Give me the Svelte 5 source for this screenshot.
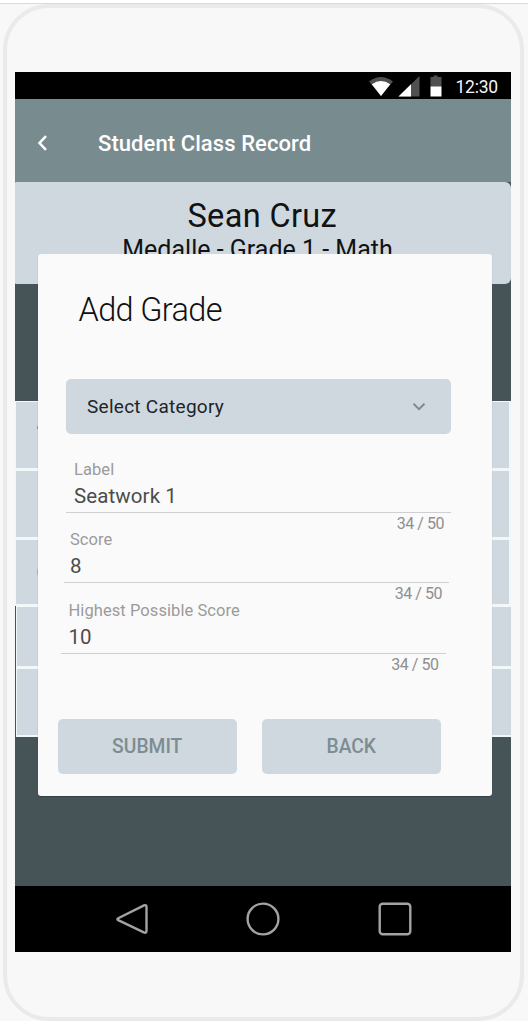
<script>
  const rows = [
    { height: 69, kind: 'framed', mark: '‘' },
    { height: 69, kind: 'framed', mark: '' },
    { height: 67, kind: 'framed', mark: '(' },
    { height: 62, kind: 'inset', mark: '' },
    { height: 69, kind: 'inset', mark: '' }
  ];
  const fields = [
    { label: 'Label', value: 'Seatwork 1', cls: 'first' },
    { label: 'Score', value: '8', cls: 'second' },
    { label: 'Highest Possible Score', value: '10', cls: 'third' }
  ];
</script>

<div class="page">
  <div class="phone">
    <div class="screen">
      <div class="status">
        <svg class="status-icons" width="78" height="28" viewBox="0 0 78 28">
          <path d="M3 9.5Q15 .5 27 9.500L15 24Z" fill="#505050" />
          <path d="M5.800 12.200Q15 6 24.200 12.200L15 24Z" fill="#fff" />
          <path d="M53.500 4V24.500H32.500Z" fill="#505050" />
          <path d="M45 12.200V24.500H32.500Z" fill="#fff" />
          <path d="M67.500 3.500h4v1.500h4v10h-11V5h3Z" fill="#505050" />
          <path d="M64.500 14.500h11v10h-11Z" fill="#fff" />
        </svg>
        <span class="clock">12:30</span>
      </div>
      <header>
        <svg width="12" height="18" viewBox="0 0 12 18"><path d="M10 2.200 3.500 9 10 15.800" fill="none" stroke="#fff" stroke-width="2.500" /></svg>
        <h1><span>Student Class Record</span></h1>
      </header>
      <section class="student">
        <div class="name"><span>Sean Cruz</span></div>
        <div class="class"><span>Medalle - Grade 1 - Math</span></div>
      </section>
      <ul class="rows">
        {#each rows as row}
          <li class={row.kind} style="height: {row.height}px"><span>{row.mark}</span></li>
        {/each}
      </ul>
      <nav>
        <svg width="496" height="66" viewBox="15 886 496 66" fill="none" stroke="#a3a3a3" stroke-width="2.400">
          <path d="M118.200 918.300 144 905.400Q146.500 904.300 146.500 907V930.500Q146.500 933.700 143.800 932.400L118.200 920.200Q116.500 919.250 118.200 918.300Z" />
          <circle cx="263" cy="919" r="15.400" />
          <rect x="379.700" y="903.700" width="30.600" height="30.600" rx="3" />
        </svg>
      </nav>
      <div class="dialog">
        <h2><span>Add Grade</span></h2>
        <div class="select">
          <span>Select Category</span>
          <svg width="14" height="10" viewBox="0 0 14 10"><path d="M1.500 1.800 7 7.200 12.500 1.800" fill="none" stroke="#7e8a91" stroke-width="2" /></svg>
        </div>
        {#each fields as field}
          <div class="field {field.cls}">
            <div class="label"><span>{field.label}</span></div>
            <div class="value"><span>{field.value}</span></div>
            <div class="count"><span>34 / 50</span></div>
          </div>
        {/each}
        <div class="actions">
          <button>SUBMIT</button>
          <button>BACK</button>
        </div>
      </div>
    </div>
  </div>
</div>

<style>
  :global(body) { background: #f8f8f8; }
  * { box-sizing: border-box; }
  .page {
    height: 1021px;
    width: 528px;
    padding-left: 3px;
    border-top: 3px solid #fff;
    box-shadow: inset 0 1px #dadada;
    font-family: Roboto, sans-serif;
    overflow: hidden;
  }
  .phone {
    width: 521px;
    height: 1017px;
    margin-top: 1px;
    padding: 64px 0 0 8px;
    border: 4px solid #eaeaea;
    border-radius: 46px;
    background: #f8f8f8;
  }
  .screen {
    position: relative;
    display: flex;
    flex-direction: column;
    width: 496px;
    height: 880px;
    background: #465357;
  }
  .status {
    display: flex;
    justify-content: flex-end;
    height: 27px;
    padding-right: 13px;
    background: #000;
    color: #f5f5f5;
  }
  .status-icons { margin-right: 11px; }
  .clock { font-size: 17.500px; line-height: 31px; letter-spacing: -.2px; }
  header {
    display: flex;
    align-items: center;
    height: 83px;
    padding: 5px 0 0 20.500px;
    background: #788b8f;
  }
  h1, h2, ul { margin: 0; padding: 0; }
  h1 {
    margin-left: 50.500px;
    padding-top: 1px;
    color: #fff;
    font-size: 22px;
    font-weight: 500;
    line-height: 28px;
    letter-spacing: .08px;
    white-space: nowrap;
  }
  .student {
    height: 102px;
    padding-top: 15px;
    border-radius: 1px 6px 6px 1px;
    background: #cfd8de;
    color: #101214;
    text-align: center;
  }
  .name { font-size: 32.500px; line-height: 38px; letter-spacing: .35px; padding-right: 1.500px; }
  .class { font-size: 25px; line-height: 30px; padding-right: 11px; }
  .rows { margin-top: 117px; height: 336px; list-style: none; }
  .rows li {
    border: 1px solid #f2f7fa;
    border-width: 1px 2px 2px 1px;
    background: #cfd8de;
    color: #566;
    font-size: 18px;
    line-height: 62px;
    padding-left: 20.500px;
  }
  .rows .inset { border-width: 1px 0 2px 1px; margin-left: 1px; }
  nav { height: 66px; margin-top: auto; background: #000; }
  nav svg { display: block; }
  .dialog {
    position: absolute;
    left: 22.500px;
    top: 181.500px;
    width: 454.500px;
    height: 542.500px;
    border-radius: 3px;
    background: #fafafa;
    box-shadow: 0 1px 1px rgba(30, 40, 45, .4);
  }
  h2 {
    padding: 36.500px 0 0 41px;
    color: #101010;
    font-size: 32.500px;
    font-weight: 300;
    line-height: 40px;
    letter-spacing: -.65px;
  }
  .select {
    display: flex;
    align-items: center;
    justify-content: space-between;
    width: 385px;
    height: 55px;
    margin: 49px 0 0 28.500px;
    padding: 0 25px 0 21px;
    border-radius: 5px;
    background: #cfd8de;
    color: #20242a;
    font-size: 19px;
    letter-spacing: .27px;
  }
  .field { width: 385px; height: 70.400px; }
  .first { margin: 26px 0 0 28.500px; --indent: 8px; }
  .second { margin-left: 26.500px; --indent: 6px; }
  .third { margin-left: 23px; --indent: 8px; }
  .label { padding-left: var(--indent); color: #9b9b9b; font-size: 16.500px; line-height: 20px; letter-spacing: .07px; }
  .value {
    height: 33px;
    padding-left: var(--indent);
    border-bottom: 1px solid #cfcfcf;
    color: #4c4c4c;
    font-size: 20.500px;
    line-height: 32px;
    letter-spacing: .1px;
  }
  .count {
    padding-right: 7px;
    color: #8f8f8f;
    font-size: 16px;
    line-height: 21px;
    letter-spacing: -.45px;
    text-align: right;
  }
  .actions { display: flex; gap: 25.500px; margin: 48.200px 0 0 20.500px; }
  button {
    width: 178.500px;
    height: 55px;
    padding: 0;
    border: 0;
    border-radius: 5px;
    background: #cfd8de;
    color: #7e8d91;
    font: 500 19.300px Roboto, sans-serif;
  }
</style>
